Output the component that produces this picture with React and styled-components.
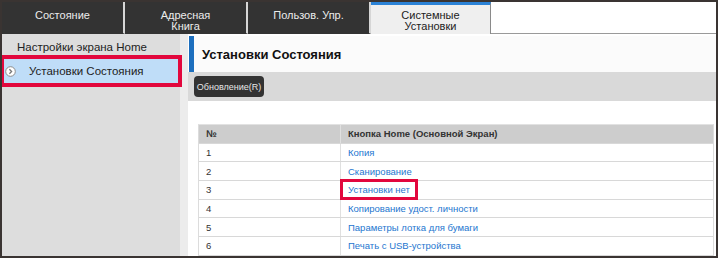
import React from "react";
import styled, { createGlobalStyle } from "styled-components";

const Global = createGlobalStyle`
  html, body { margin: 0; padding: 0; background: #ffffff; }
  body { font-family: "Liberation Sans", Arial, sans-serif; }
  * { box-sizing: border-box; }
`;

const Frame = styled.div`
  width: 718px;
  height: 258px;
  border: 2px solid #3a3432;
  display: flex;
  flex-direction: column;
  overflow: hidden;
  background: #fff;
`;

const TabBar = styled.div`
  display: flex;
  height: 32px;
  flex: none;
`;

const Tab = styled.div`
  width: ${(p) => (p.$active ? "120px" : "123px")};
  flex: none;
  padding-top: ${(p) => (p.$active ? "5px" : "8px")};
  text-align: center;
  font-size: 11px;
  line-height: 10.5px;
  color: ${(p) => (p.$active ? "#222" : "#ececec")};
  background: ${(p) => (p.$active ? "#efefef" : "#333333")};
  border-right: ${(p) => (p.$active ? "1px solid #8a8a8a" : "2px solid #d6d6d6")};
  border-top: ${(p) => (p.$active ? "3px solid #2b82d6" : "none")};
  border-bottom: ${(p) => (p.$active ? "none" : "1px solid #333")};
`;

const TabFill = styled.div`
  flex: 1;
  border-bottom: 1px solid #9a9a9a;
  background: #fff;
`;

const Body = styled.div`
  flex: 1;
  display: flex;
  min-height: 0;
`;

const Sidebar = styled.div`
  width: 178px;
  flex: none;
  background: #dddddd;
  position: relative;
`;

const SideItem = styled.div`
  height: ${(p) => (p.$selected ? "28px" : "23px")};
  display: flex;
  align-items: center;
  padding-left: ${(p) => (p.$selected ? "3px" : "15px")};
  padding-top: ${(p) => (p.$selected ? "0" : "3px")};
  font-size: 11.5px;
  color: #222;
  background: ${(p) => (p.$selected ? "#bfddf8" : "transparent")};
  outline: ${(p) => (p.$selected ? "4px solid #e2073d" : "none")};
  outline-offset: -2px;
  position: relative;
  z-index: 1;
`;

const ArrowIcon = styled.svg`
  width: 11px;
  height: 11px;
  margin-right: 13px;
  flex: none;
`;

const Divider = styled.div`
  width: 8px;
  flex: none;
  background: #ececec;
`;

const Main = styled.div`
  flex: 1;
  display: flex;
  flex-direction: column;
  background: #fff;
  padding-top: 2px;
  min-width: 0;
`;

const Header = styled.div`
  height: 36px;
  flex: none;
  display: flex;
  align-items: center;
  padding-left: 8px;
  margin-left: 1px;
  background: #fbfbfb;
  border-left: 5px solid #1d6fbe;
  font-size: 13px;
  font-weight: bold;
  color: #111;
`;

const Toolbar = styled.div`
  height: 29px;
  flex: none;
  display: flex;
  align-items: center;
  padding-left: 6px;
  background: #d9d9d9;
`;

const Button = styled.div`
  height: 21px;
  width: 70px;
  display: flex;
  align-items: center;
  justify-content: center;
  background: #333333;
  border-radius: 4px;
  color: #e6e6e6;
  font-size: 9px;
`;

const TableWrap = styled.div`
  margin: 23px 2px 0 10px;
  border-left: 1px solid #dcdcdc;
  border-right: 1px solid #dcdcdc;
  border-top: 1px solid #e2e2e2;
`;

const Row = styled.div`
  display: grid;
  grid-template-columns: 141px 1fr;
  height: ${(p) => (p.$head ? "18.7px" : "18.67px")};
  background: ${(p) => (p.$head ? "#cdcdcd" : "#fff")};
  border-bottom: 1px solid #d8d8d8;
  font-size: 9.5px;
  font-weight: ${(p) => (p.$head ? "bold" : "normal")};
`;

const Cell = styled.div`
  display: flex;
  align-items: center;
  padding-left: 7px;
  color: ${(p) => (p.$link ? "#2476cf" : "#333")};
  border-left: ${(p) => (p.$second ? "1px solid #e0e0e0" : "none")};
  white-space: nowrap;
`;

const Marked = styled.span`
  display: inline-block;
  margin-left: -5px;
  padding: 0 5px;
  line-height: 15px;
  outline: 3px solid #e2073d;
  background: #fff;
  position: relative;
  z-index: 1;
`;

const rows = [
  ["1", "Копия"],
  ["2", "Сканирование"],
  ["3", "Установки нет", true],
  ["4", "Копирование удост. личности"],
  ["5", "Параметры лотка для бумаги"],
  ["6", "Печать с USB-устройства"],
];

export default function App() {
  return (
    <>
      <Global />
      <Frame>
        <TabBar>
          <Tab>Состояние</Tab>
          <Tab>
            Адресная
            <br />
            Книга
          </Tab>
          <Tab>Пользов. Упр.</Tab>
          <Tab $active>
            Системные
            <br />
            Установки
          </Tab>
          <TabFill />
        </TabBar>
        <Body>
          <Sidebar>
            <SideItem>Настройки экрана Home</SideItem>
            <SideItem $selected>
              <ArrowIcon viewBox="0 0 11 11">
                <circle cx="5.5" cy="5.5" r="4.8" fill="#fff" stroke="#8c8c8c" strokeWidth="1" />
                <path d="M4.4 3.2 L6.6 5.5 L4.4 7.8" fill="none" stroke="#777" strokeWidth="1.3" />
              </ArrowIcon>
              Установки Состояния
            </SideItem>
          </Sidebar>
          <Divider />
          <Main>
            <Header>Установки Состояния</Header>
            <Toolbar>
              <Button>Обновление(R)</Button>
            </Toolbar>
            <TableWrap>
              <Row $head>
                <Cell>№</Cell>
                <Cell $second>Кнопка Home (Основной Экран)</Cell>
              </Row>
              {rows.map(([n, label, mark]) => (
                <Row key={n}>
                  <Cell>{n}</Cell>
                  <Cell $second $link>
                    {mark ? <Marked>{label}</Marked> : label}
                  </Cell>
                </Row>
              ))}
              <Row />
            </TableWrap>
          </Main>
        </Body>
      </Frame>
    </>
  );
}
